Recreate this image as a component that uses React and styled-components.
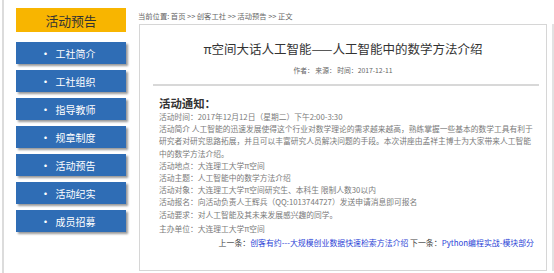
import React from 'react';
import styled, { createGlobalStyle } from 'styled-components';

const GlobalStyle = createGlobalStyle`
  body {
    margin: 0;
    background: #fff;
    font-family: "Noto Sans CJK SC", "Noto Sans", "Liberation Sans", sans-serif;
  }
`;

const Page = styled.div`
  display: flex;
  width: 554px;
  height: 273px;
  overflow: hidden;
`;

const Sidebar = styled.div`
  box-sizing: border-box;
  width: 136px;
  height: 273px;
  margin-left: 2px;
  border-left: 2px solid #dcdcdc;
  padding: 8px 0 0 12px;
`;

const SideHeader = styled.div`
  width: 110px;
  height: 24px;
  background: #f8b500;
  color: #333;
  font-size: 12.8px;
  display: flex;
  align-items: center;
  justify-content: center;
`;

const NavList = styled.div`
  display: flex;
  flex-direction: column;
  gap: 6px;
  margin-top: 10px;
`;

const NavButton = styled.div`
  box-sizing: border-box;
  width: 110px;
  height: 22px;
  padding-right: 6px;
  background: #2f6db5;
  color: #fff;
  font-size: 10px;
  display: flex;
  align-items: center;
  justify-content: center;
  box-shadow: 2px 2px 2px rgba(0, 0, 0, 0.4);

  &::before {
    content: '·';
    margin-right: 5px;
    font-weight: bold;
  }
`;

const Main = styled.div`
  flex: 1;
  padding: 11px 0 0 1px;
`;

const Crumb = styled.div`
  font-size: 7.3px;
  line-height: 10px;
  color: #666;
  white-space: nowrap;
`;

const Frame = styled.div`
  margin-top: 3px;
  padding-right: 5px;
  border-right: 2px solid #e2e2e2;
  width: 409px;
`;

const Box = styled.div`
  box-sizing: border-box;
  margin-left: 1px;
  width: 408px;
  height: 247px;
  border: 1px solid #d6d6d6;
`;

const Title = styled.h1`
  margin: 0;
  padding-top: 16px;
  font-size: 12.5px;
  line-height: 16px;
  font-weight: normal;
  color: #333;
  text-align: center;
  white-space: nowrap;
`;

const Meta = styled.div`
  margin-top: 8px;
  font-size: 6.8px;
  line-height: 10px;
  color: #666;
  text-align: center;
`;

const Divider = styled.div`
  margin: 9px 7px 0 13px;
  border-top: 2px solid #d8d8d8;
`;

const Content = styled.div`
  padding: 10px 12px 0 19px;
  color: #7a7a7a;
  font-size: 7.75px;
  line-height: 12.2px;
  white-space: nowrap;
`;

const Heading = styled.div`
  font-size: 11.4px;
  line-height: 14px;
  font-weight: bold;
  color: #333;
  margin-bottom: 1px;
`;

const Line = styled.div`
  margin-top: ${p => (p.gap ? '2px' : '0')};
`;

const Pager = styled.div`
  margin-top: 2px;
  text-align: right;
  color: #444;
  font-size: 7.9px;
`;

const Link = styled.a`
  color: #2a3fd6;
  text-decoration: none;
`;

const navItems = ['工社简介', '工社组织', '指导教师', '规章制度', '活动预告', '活动纪实', '成员招募'];

export default function App() {
  return (
    <Page>
      <GlobalStyle />
      <Sidebar>
        <SideHeader>活动预告</SideHeader>
        <NavList>
          {navItems.map(item => (
            <NavButton key={item}>{item}</NavButton>
          ))}
        </NavList>
      </Sidebar>
      <Main>
        <Crumb>当前位置: 首页 &gt;&gt; 创客工社 &gt;&gt; 活动预告 &gt;&gt; 正文</Crumb>
        <Frame>
          <Box>
            <Title>π空间大话人工智能——人工智能中的数学方法介绍</Title>
            <Meta>作者： 来源： 时间：2017-12-11</Meta>
            <Divider />
            <Content>
              <Heading>活动通知：</Heading>
              <Line>活动时间：2017年12月12日（星期二）下午2:00-3:30</Line>
              <Line>活动简介 人工智能的迅速发展使得这个行业对数学理论的需求越来越高，熟练掌握一些基本的数学工具有利于</Line>
              <Line>研究者对研究思路拓展，并且可以丰富研究人员解决问题的手段。本次讲座由孟祥主博士为大家带来人工智能</Line>
              <Line>中的数学方法介绍。</Line>
              <Line>活动地点：大连理工大学π空间</Line>
              <Line>活动主题：人工智能中的数学方法介绍</Line>
              <Line>活动对象：大连理工大学π空间研究生、本科生 限制人数30以内</Line>
              <Line>活动报名：向活动负责人王辉兵（QQ:1013744727）发送申请消息即可报名</Line>
              <Line>活动要求：对人工智能及其未来发展感兴趣的同学。</Line>
              <Line gap>主办单位：大连理工大学π空间</Line>
              <Pager>
                上一条：<Link href="#">创客有约---大规模创业数据快速检索方法介绍</Link> 下一条：<Link href="#">Python编程实战-模块部分</Link>
              </Pager>
            </Content>
          </Box>
        </Frame>
      </Main>
    </Page>
  );
}
